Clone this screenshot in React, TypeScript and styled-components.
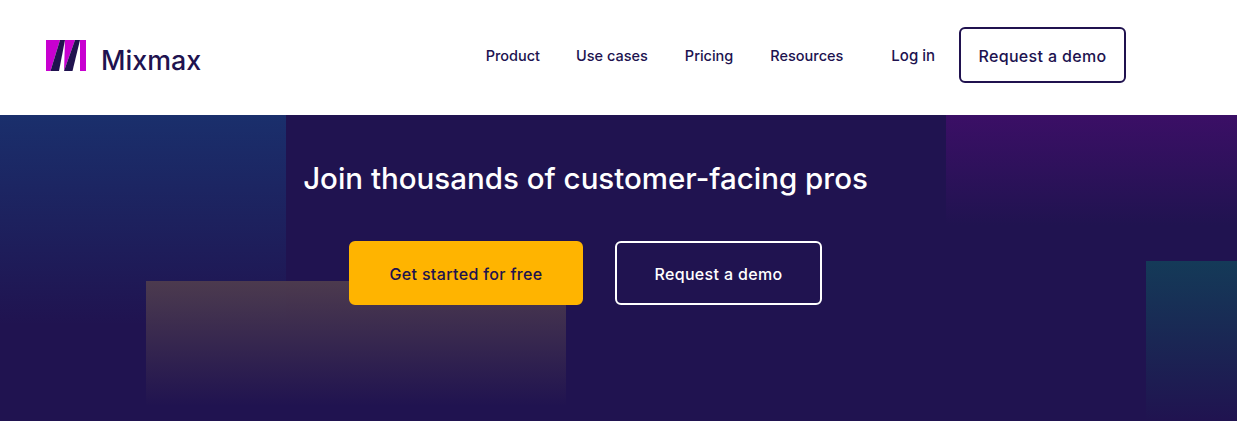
import React from "react";
import styled, { createGlobalStyle } from "styled-components";

const Global = createGlobalStyle`
  html, body { margin: 0; padding: 0; background: #fff; }
  body { font-family: "Inter", "Liberation Sans", sans-serif; }
  #root { width: 1237px; height: 431px; overflow: hidden; }
`;

const Header = styled.header`
  height: 115px;
  display: flex;
  align-items: center;
  padding: 0 111px 4px 46px;
  box-sizing: border-box;
  background: #fff;
`;

const Brand = styled.div`
  display: flex;
  align-items: flex-end;
  gap: 15px;
  margin-right: auto;
`;

const Wordmark = styled.span`
  font-size: 26.8px;
  font-weight: 500;
  color: #20124f;
  line-height: 28px;
  margin-bottom: -3px;
`;

const NavLink = styled.a<{ $gap: number; $size?: number }>`
  font-size: ${(p) => p.$size ?? 14.5}px;
  font-weight: 500;
  color: #20124f;
  margin-right: ${(p) => p.$gap}px;
  white-space: nowrap;
`;

const Button = styled.a<{ $variant: "outline" | "light" | "solid" }>`
  display: flex;
  align-items: center;
  justify-content: center;
  box-sizing: border-box;
  padding-top: 2px;
  border-radius: 6px;
  font-size: 16px;
  letter-spacing: 0.35px;
  font-weight: 500;
  white-space: nowrap;
  border: 2px solid ${(p) => (p.$variant === "outline" ? "#20124f" : p.$variant === "light" ? "#fff" : "#ffb400")};
  background: ${(p) => (p.$variant === "solid" ? "#ffb400" : "transparent")};
  color: ${(p) => (p.$variant === "light" ? "#fff" : "#20124f")};
`;

const HeaderButton = styled(Button)`
  width: 167px;
  height: 56px;
  margin-top: -2px;
`;

const Hero = styled.section`
  position: relative;
  height: 306px;
  background: #201350;
  overflow: hidden;
  display: flex;
  flex-direction: column;
  align-items: center;
  padding-right: 66px;
`;

const Block = styled.div<{ $x: number; $y: number; $w: number; $h: number; $c: string }>`
  position: absolute;
  left: ${(p) => p.$x}px;
  top: ${(p) => p.$y}px;
  width: ${(p) => p.$w}px;
  height: ${(p) => p.$h}px;
  background: linear-gradient(180deg, ${(p) => p.$c} 0%, rgba(32, 19, 80, 0) 100%);
`;

const Title = styled.h1`
  position: relative;
  margin: 43px 0 0;
  font-size: 29.5px;
  line-height: 40px;
  font-weight: 500;
  color: #fff;
  white-space: nowrap;
`;

const Actions = styled.div`
  position: relative;
  display: flex;
  gap: 32px;
  margin-top: 43px;
`;

const HeroButton = styled(Button)<{ $w: number }>`
  width: ${(p) => p.$w}px;
  height: 64px;
`;

export default function App() {
  return (
    <>
      <Global />
      <Header>
        <Brand>
          <svg width="40" height="31" viewBox="0 0 40 31" aria-hidden="true">
            <polygon points="0,0 14,0 4.5,31 0,31" fill="#c800d0" />
            <polygon points="4.5,31 13,31 19,0 14,0" fill="#20124f" />
            <polygon points="19,0 29,0 18,31" fill="#c800d0" />
            <polygon points="18,31 26.5,31 34,0 29,0" fill="#20124f" />
            <rect x="34" y="0" width="6" height="31" fill="#c800d0" />
          </svg>
          <Wordmark>Mixmax</Wordmark>
        </Brand>
        <NavLink $gap={36}>Product</NavLink>
        <NavLink $gap={37}>Use cases</NavLink>
        <NavLink $gap={37}>Pricing</NavLink>
        <NavLink $gap={48}>Resources</NavLink>
        <NavLink $gap={24} $size={15}>Log in</NavLink>
        <HeaderButton $variant="outline">Request a demo</HeaderButton>
      </Header>
      <Hero>
        <Block $x={0} $y={0} $w={286} $h={210} $c="#1a2f6c" />
        <Block $x={946} $y={0} $w={291} $h={110} $c="#3b0f66" />
        <Block $x={1146} $y={146} $w={91} $h={160} $c="#143a58" />
        <Block $x={146} $y={166} $w={420} $h={125} $c="#4c3a4e" />
        <Title>Join thousands of customer-facing pros</Title>
        <Actions>
          <HeroButton $variant="solid" $w={234}>Get started for free</HeroButton>
          <HeroButton $variant="light" $w={207}>Request a demo</HeroButton>
        </Actions>
      </Hero>
    </>
  );
}
